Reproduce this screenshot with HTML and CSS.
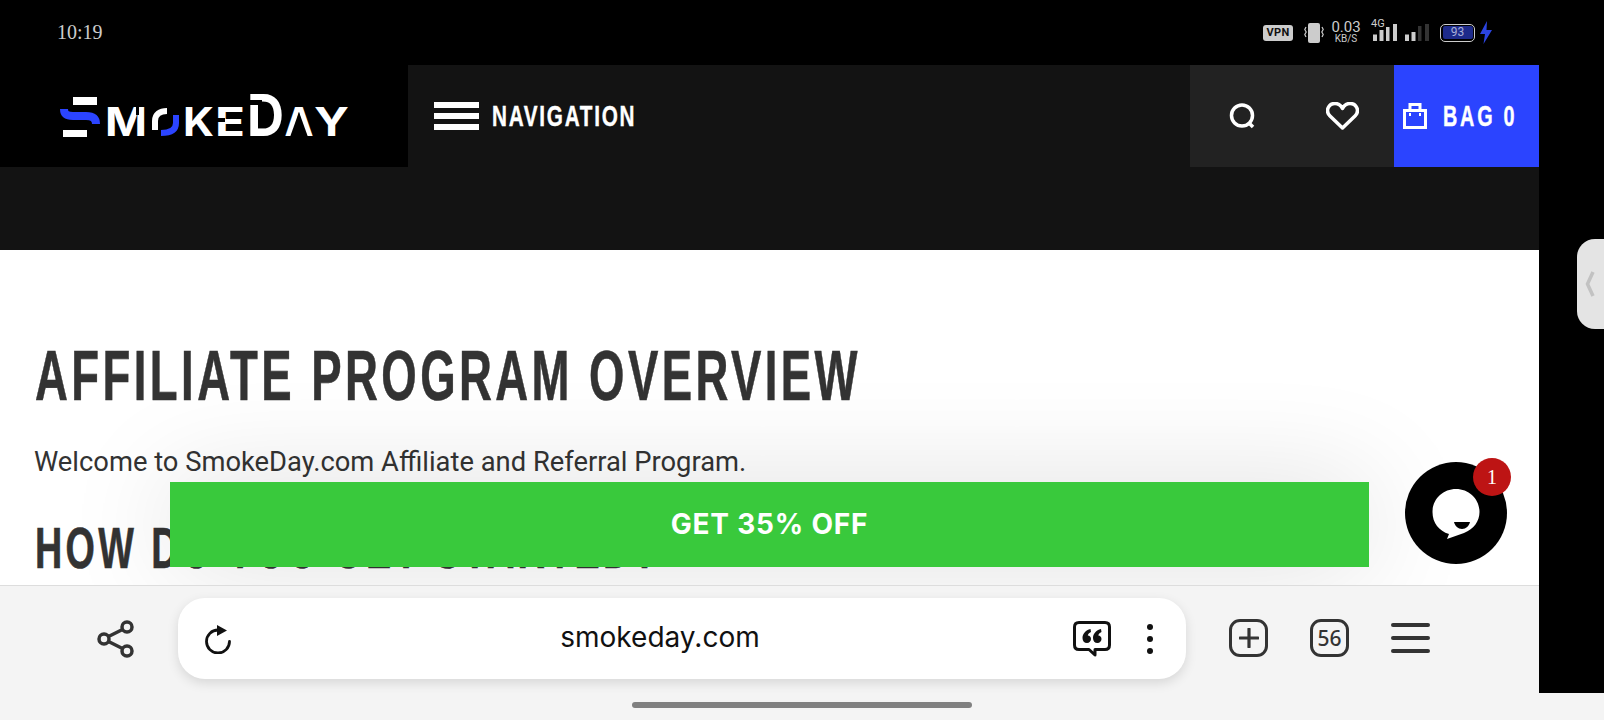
FILE: index.html
```html
<!DOCTYPE html>
<html lang="en">
<head>
  <meta charset="UTF-8">
  <title>Affiliate Program Overview - SmokeDay</title>
  <link rel="stylesheet" href="styles.css">
</head>
<body>
  <div class="status-bar">
    <span class="clock">10:19</span>
    <div class="status-icons">
      <span class="vpn">VPN</span>
      <svg class="vibrate" width="20" height="20" viewBox="0 0 20 20">
        <rect x="4" y="0" width="12" height="20" rx="2" fill="#ccc"/>
        <path d="M2 4 L0.8 6.500 L2.200 9 L0.800 11.500 L2 14 M18 4 L19.200 6.500 L17.800 9 L19.200 11.500 L18 14" fill="none" stroke="#ccc" stroke-width="1.200"/>
      </svg>
      <div class="speed"><span>0.03</span><small>KB/S</small></div>
      <div class="network">
        <span class="net-type">4G</span>
        <svg width="24" height="17" viewBox="0 0 24 17">
          <rect x="0" y="10.500" width="4" height="6.500" fill="#ccc"/>
          <rect x="6.500" y="6" width="4" height="11" fill="#ccc"/>
          <rect x="13" y="3" width="3.500" height="14" fill="#ccc"/>
          <rect x="20" y="0" width="4" height="17" fill="#ccc"/>
        </svg>
      </div>
      <svg class="signal" width="24" height="17" viewBox="0 0 24 17">
        <rect x="0" y="10.500" width="4" height="6.500" fill="#ccc"/>
        <rect x="6.500" y="8" width="4" height="9" fill="#ccc"/>
        <rect x="13" y="2" width="3.500" height="15" fill="#333"/>
        <rect x="20" y="0" width="4" height="17" fill="#333"/>
      </svg>
      <div class="battery"><div class="battery-fill">93</div></div>
      <svg class="bolt" width="12" height="23" viewBox="0 0 12 23"><path d="M7 0 L0 13 H5 L3.500 23 L12 9 H6.500 Z" fill="#2b44e0"/></svg>
    </div>
  </div>

  <div class="site">
    <header class="site-header">
      <a class="logo">
        <svg width="310" height="90" viewBox="50 70 310 90" aria-label="SmokeDay">
          <rect x="73" y="97" width="24" height="8" fill="#fff"/>
          <rect x="63" y="130" width="24" height="7" fill="#fff"/>
          <path d="M64 109 C64 115 68 116 73 116 H86 C92 116 96 118 96 124" fill="none" stroke="#2b44ff" stroke-width="8"/>
          <text class="logo-text" x="105" y="136" font-size="40" textLength="42" lengthAdjust="spacingAndGlyphs">M</text>
          <rect x="136" y="104" width="3" height="11" fill="#000"/>
          <path d="M155 130 V121 C155 114 160 111 167 111" fill="none" stroke="#fff" stroke-width="6"/>
          <path d="M176 115 V123 C176 130 171 133 161 133" fill="none" stroke="#2b44ff" stroke-width="6"/>
          <text class="logo-text" x="183" y="136" font-size="40" textLength="31" lengthAdjust="spacingAndGlyphs">K</text>
          <text class="logo-text" x="215" y="136" font-size="40" textLength="30" lengthAdjust="spacingAndGlyphs">E</text>
          <rect x="216" y="118" width="9" height="4" fill="#000"/>
          <text class="logo-text" x="247" y="136" font-size="58" textLength="37" lengthAdjust="spacingAndGlyphs">D</text>
          <rect x="247" y="100" width="15" height="5" fill="#000"/>
          <text class="logo-text" x="284.500" y="136" font-size="40" textLength="29" lengthAdjust="spacingAndGlyphs">A</text>
          <polygon points="299,112 290,137 308,137" fill="#000"/>
          <text class="logo-text" x="314" y="136" font-size="40" textLength="35" lengthAdjust="spacingAndGlyphs">Y</text>
        </svg>
      </a>
      <nav class="nav-toggle">
        <div class="burger"><i></i><i></i><i></i></div>
        <span class="nav-label">NAVIGATION</span>
      </nav>
      <div class="header-actions">
        <div class="action">
          <svg width="30" height="30" viewBox="0 0 30 30"><circle cx="15" cy="14.500" r="10.500" fill="none" stroke="#fff" stroke-width="3.500"/><path d="M22 22 L26 26" stroke="#fff" stroke-width="3.500"/></svg>
        </div>
        <div class="action">
          <svg width="33" height="28" viewBox="0 0 33 28"><path d="M16.500 26 L3.500 13.500 C-1 8 3 1.500 9 1.500 C12.500 1.500 15 3.500 16.500 6.500 C18 3.500 20.500 1.500 24 1.500 C30 1.500 34 8 29.500 13.500 Z" fill="none" stroke="#fff" stroke-width="3.500" stroke-linejoin="round"/></svg>
        </div>
      </div>
      <div class="bag">
        <svg width="24" height="26" viewBox="0 0 24 26"><path d="M1.500 7.500 H22.500 V24.500 H1.500 Z M7 7.500 V1.500 H17 V7.500" fill="none" stroke="#fff" stroke-width="3"/><path d="M7 10 V13 M17 10 V13" stroke="#fff" stroke-width="2"/></svg>
        <span class="bag-label">BAG 0</span>
      </div>
    </header>
    <div class="header-band"></div>
    <main class="content">
      <h1><span>AFFILIATE PROGRAM OVERVIEW</span></h1>
      <p>Welcome to SmokeDay.com Affiliate and Referral Program.</p>
      <h2><span>HOW DO YOU GET STARTED?</span></h2>
    </main>
    <div class="promo">GET 35% OFF</div>
    <div class="chat">
      <svg width="60" height="60" viewBox="0 0 60 60">
        <path d="M30 6 C43 6 53.500 16 53.500 29 C53.500 38 48 46 38 50 L21 56 L23 51 C13 48 6.500 40 6.500 29 C6.500 16 17 6 30 6 Z" fill="#fff"/>
        <path d="M28 39 H44 C43 43 40 46 36 46 C32 46 29 43 28 39 Z" fill="#000"/>
      </svg>
      <span class="chat-badge">1</span>
    </div>
  </div>

  <div class="browser-bar">
    <svg class="share" width="38" height="38" viewBox="0 0 38 38">
      <circle cx="30" cy="7" r="5" fill="none" stroke="#333" stroke-width="3.500"/>
      <circle cx="7" cy="19" r="5" fill="none" stroke="#333" stroke-width="3.500"/>
      <circle cx="30" cy="31" r="5" fill="none" stroke="#333" stroke-width="3.500"/>
      <path d="M11.500 16.500 L25.500 9.500 M11.500 21.500 L25.500 28.500" stroke="#333" stroke-width="3.500"/>
    </svg>
    <div class="url-pill">
      <svg width="28" height="30" viewBox="0 0 28 30">
        <path d="M14 6 A11.500 11.500 0 1 0 25.500 17.500" fill="none" stroke="#111" stroke-width="2.800" stroke-linecap="round"/>
        <path d="M13 1 L23 6.500 L13 12 Z" fill="#111"/>
      </svg>
      <span class="url">smokeday.com</span>
      <svg class="quote" width="38" height="36" viewBox="0 0 38 36">
        <path d="M6 1.500 H32 C35 1.500 36.500 3 36.500 6 V24 C36.500 27 35 28.500 32 28.500 H22 L22 34 L16 28.500 H6 C3 28.500 1.500 27 1.500 24 V6 C1.500 3 3 1.500 6 1.500 Z" fill="none" stroke="#111" stroke-width="3" stroke-linejoin="round"/>
        <path d="M17.500 8 C12.500 9 9.500 13 9.500 17 C9.500 20 11.300 22 14 22 C16.300 22 18 20.300 18 18 C18 15.800 16.500 14.500 14.800 14.500 C15 13 16.200 11.800 18 11 Z M28 8 C23 9 20 13 20 17 C20 20 21.800 22 24.500 22 C26.800 22 28.500 20.300 28.500 18 C28.500 15.800 27 14.500 25.300 14.500 C25.500 13 26.700 11.800 28.500 11 Z" fill="#111"/>
      </svg>
      <div class="dots"><i></i><i></i><i></i></div>
    </div>
    <div class="square-btn"><svg width="20" height="20" viewBox="0 0 20 20"><path d="M10 1 V19 M1 10 H19" stroke="#333" stroke-width="3.200" stroke-linecap="round"/></svg></div>
    <div class="square-btn tabs">56</div>
    <div class="menu-btn"><i></i><i></i><i></i></div>
  </div>

  <div class="gesture-bar"><div class="gesture-pill"></div></div>

  <div class="side-handle">
    <svg width="10" height="28" viewBox="0 0 10 28"><path d="M8 2 L2.500 14 L8 26" fill="none" stroke="#c2c2c2" stroke-width="3.500"/></svg>
  </div>
</body>
</html>
```

FILE: styles.css
```css
html, body {
  margin: 0;
  padding: 0;
}
body {
  width: 1604px;
  height: 720px;
  background: #000;
  overflow: hidden;
  position: relative;
  display: flex;
  flex-direction: column;
  font-family: 'Roboto', sans-serif;
}

/* phone status bar */
.status-bar {
  height: 65px;
  display: flex;
  align-items: center;
  justify-content: space-between;
  padding: 0 112px 0 57px;
  color: #ccc;
}
.clock {
  font-family: 'Liberation Serif', serif;
  font-size: 20px;
}
.status-icons {
  display: flex;
  align-items: center;
}
.vpn {
  width: 30px;
  height: 16px;
  line-height: 16px;
  background: #ccc;
  color: #111;
  border-radius: 3px;
  font-size: 11px;
  font-weight: 700;
  text-align: center;
  letter-spacing: 0.3px;
}
.vibrate {
  margin-left: 11px;
}
.speed {
  margin-left: 7px;
  width: 30px;
  display: flex;
  flex-direction: column;
  align-items: center;
  line-height: 10px;
}
.speed span {
  font-size: 15px;
  line-height: 13px;
}
.speed small {
  font-size: 10px;
}
.network {
  margin-left: 12px;
  position: relative;
}
.network svg {
  display: block;
}
.net-type {
  position: absolute;
  left: -2px;
  top: -6px;
  font-size: 11px;
  line-height: 11px;
  background: #000;
}
.signal {
  margin-left: 8px;
}
.battery {
  margin-left: 11px;
  width: 35px;
  height: 18px;
  box-sizing: border-box;
  border: 1.5px solid #ccc;
  border-radius: 5px;
  padding: 1.5px;
}
.battery-fill {
  height: 100%;
  background: #1d2a8a;
  border-radius: 2px;
  font-size: 12px;
  line-height: 12px;
  text-align: center;
  color: #a8b0d8;
}
.bolt {
  margin-left: 5px;
}

/* site */
.site {
  width: 1539px;
  height: 520px;
  flex: none;
  background: #fff;
  position: relative;
  overflow: hidden;
}
.site-header {
  height: 102px;
  display: flex;
  background: #131313;
}
.logo {
  width: 408px;
  background: #000;
  display: flex;
  align-items: flex-start;
  padding-left: 50px;
  padding-top: 5px;
  box-sizing: border-box;
}
.logo-text {
  font-family: 'Inter', sans-serif;
  font-weight: 700;
  fill: #fff;
}
.nav-toggle {
  flex: 1;
  display: flex;
  align-items: center;
  padding-left: 26px;
  gap: 13px;
}
.burger {
  width: 45px;
  display: flex;
  flex-direction: column;
  gap: 5px;
}
.burger i {
  height: 6px;
  background: #fff;
}
/* no condensed face installed, so the heading font is squeezed */
.nav-label, .bag-label, .content h1 span, .content h2 span {
  display: inline-block;
  font-family: 'Liberation Sans', sans-serif;
  font-weight: 700;
  white-space: nowrap;
  transform-origin: left center;
}
.nav-label, .bag-label {
  flex: none;
  font-size: 30px;
  color: #fff;
  -webkit-text-stroke: 0.4px #fff;
}
.nav-label {
  letter-spacing: 2.5px;
  transform: scaleX(0.69);
}
.bag-label {
  letter-spacing: 4.2px;
  transform: scaleX(0.66);
}
.header-actions {
  width: 204px;
  background: #222;
  display: flex;
  padding: 0 2px;
  box-sizing: border-box;
}
.action {
  flex: 1;
  display: flex;
  align-items: center;
  justify-content: center;
}
.bag {
  width: 145px;
  background: #2b44ff;
  display: flex;
  align-items: center;
  padding-left: 9px;
  gap: 16px;
  box-sizing: border-box;
}
.bag svg {
  flex: none;
}
.header-band {
  height: 83px;
  background: #131313;
}
.content {
  padding: 88px 35px 0;
  color: #333;
}
.content h1 {
  margin: 0;
  font-size: 70px;
  line-height: 76px;
  font-weight: 700;
}
.content h1 span {
  letter-spacing: 5.3px;
  transform: scaleX(0.65);
  -webkit-text-stroke: 0.6px #333;
}
.content p {
  margin: 30px 0 0 -1px;
  font-size: 27.35px;
  line-height: 36px;
}
.content h2 {
  margin: 36px 0 0;
  font-size: 58px;
  line-height: 64px;
  font-weight: 700;
}
.content h2 span {
  letter-spacing: 5.2px;
  transform: scaleX(0.65);
  -webkit-text-stroke: 0.6px #333;
}
.promo {
  position: absolute;
  left: 170px;
  top: 417px;
  width: 1199px;
  height: 85px;
  line-height: 85px;
  background: #39c93c;
  color: #fff;
  font-family: 'Inter', sans-serif;
  font-weight: 700;
  font-size: 28px;
  letter-spacing: 0.8px;
  text-align: center;
  box-shadow: 0 0 110px rgba(0, 0, 0, 0.13);
}
.chat {
  position: absolute;
  left: 1405px;
  top: 397px;
  width: 102px;
  height: 102px;
  border-radius: 50%;
  background: #000;
  display: flex;
  align-items: center;
  justify-content: center;
}
.chat-badge {
  position: absolute;
  left: 68px;
  top: -4px;
  width: 38px;
  height: 38px;
  line-height: 38px;
  border-radius: 50%;
  background: #bd1414;
  color: #fff;
  font-family: 'Liberation Serif', serif;
  font-size: 20px;
  text-align: center;
}

/* browser toolbar */
.browser-bar {
  width: 1539px;
  height: 108px;
  flex: none;
  box-sizing: border-box;
  background: #f4f4f4;
  border-top: 1px solid #ddd;
  display: flex;
  align-items: center;
  padding: 0 109px 0 97px;
}
.share {
  flex: none;
  margin-top: -2px;
}
.url-pill {
  flex: none;
  margin-left: 43px;
  width: 1008px;
  height: 81px;
  margin-top: -2px;
  background: #fff;
  border-radius: 27px;
  box-shadow: 0 4px 12px rgba(0, 0, 0, 0.12);
  display: flex;
  align-items: center;
  padding: 0 33px 0 26px;
  box-sizing: border-box;
}
.url {
  flex: 1;
  text-align: center;
  font-family: 'Inter', sans-serif;
  font-size: 28px;
  color: #111;
  padding-left: 15px;
  margin-top: -3px;
}
.quote {
  margin-right: 36px;
}
.dots {
  display: flex;
  flex-direction: column;
  gap: 6px;
}
.dots i {
  width: 6px;
  height: 6px;
  border-radius: 50%;
  background: #111;
}
.square-btn {
  flex: none;
  width: 39px;
  height: 38px;
  box-sizing: border-box;
  border: 3px solid #333;
  border-radius: 11px;
  margin: -3px 0 0 43px;
  display: flex;
  align-items: center;
  justify-content: center;
}
.tabs {
  margin-left: 42px;
  font-family: 'Noto Sans', sans-serif;
  font-size: 21px;
  font-weight: 500;
  color: #333;
}
.menu-btn {
  flex: none;
  width: 39px;
  margin: -3px 0 0 42px;
  display: flex;
  flex-direction: column;
  gap: 9px;
}
.menu-btn i {
  height: 4px;
  border-radius: 2px;
  background: #333;
}
.gesture-bar {
  flex: 1;
  background: #f4f4f4;
  display: flex;
  justify-content: center;
  padding-top: 9px;
}
.gesture-pill {
  width: 340px;
  height: 6px;
  border-radius: 3px;
  background: #808080;
}
.side-handle {
  position: absolute;
  right: 0;
  top: 239px;
  width: 27px;
  height: 90px;
  background: #e4e4e4;
  border-radius: 18px 0 0 18px;
  display: flex;
  align-items: center;
  padding-left: 8px;
  box-sizing: border-box;
}
```
